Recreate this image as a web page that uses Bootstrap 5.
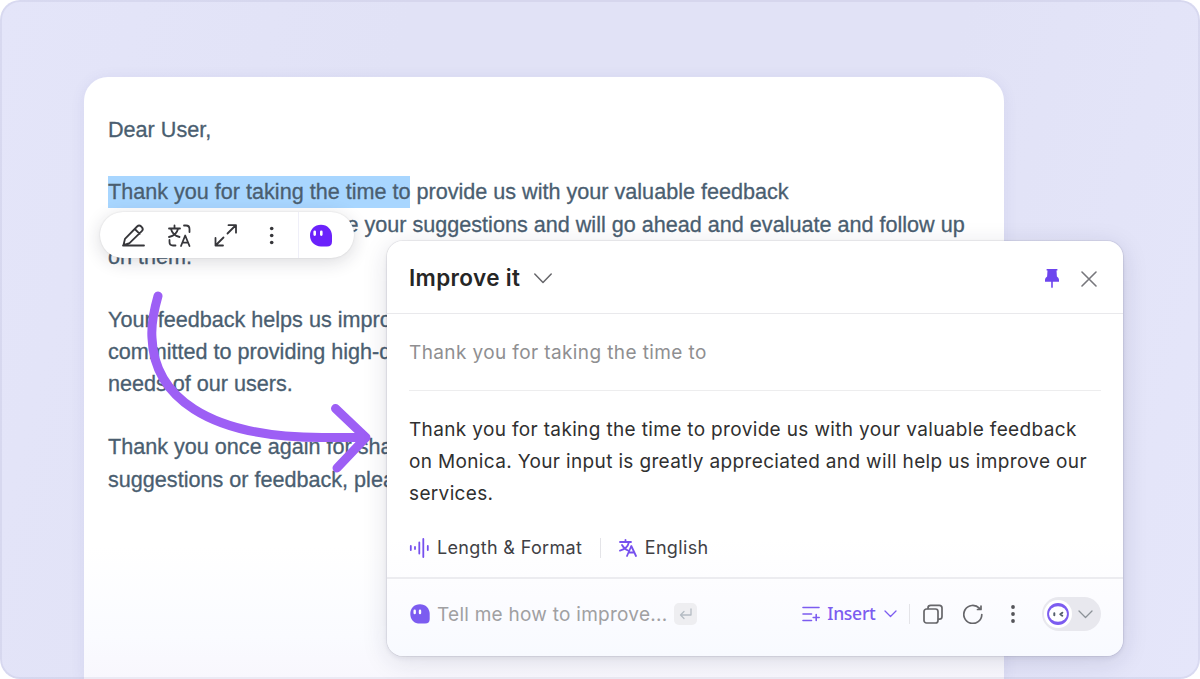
<!DOCTYPE html>
<html lang="en">
<head>
<meta charset="utf-8">
<meta name="viewport" content="width=device-width, initial-scale=1">
<title>Improve it</title>
<link href="https://cdn.jsdelivr.net/npm/bootstrap@5.3.0/dist/css/bootstrap.min.css" rel="stylesheet">
<style>
  body { background: #fff; height: 679px; }
  .stage {
    height: 678.5px; border-radius: 20px;
    padding: 77px 0 0 84px;
    background: linear-gradient(105deg, #e4e5f9 0%, #e1e2f6 30%, #e1e2f6 70%, #e5e6fa 100%);
  }
  .stage::after { content: ""; position: absolute; inset: 0; border: 2px solid rgba(60, 60, 120, .065); border-radius: 20px; pointer-events: none; }
  .letter {
    width: 920px; height: 602px; border-radius: 24px 24px 0 0; padding: 36.7px 24px 0;
    background: linear-gradient(#fff 0%, #fff 78%, #fafbff 93%, #f8f7fd 100%);
    box-shadow: 0 2px 14px rgba(90, 90, 170, .10);
    font: 21.6px/32.3px "Liberation Sans", Arial, sans-serif; color: #4a5e70; -webkit-text-stroke: .3px #4a5e70;
  }
  .letter p { margin: 0 0 30.5px; white-space: nowrap; }
  .picked { background: #a8d6ff; padding: 3px 0 4px; }
  .tools { left: 100px; top: 212px; width: 254px; height: 46px; background: #fff; box-shadow: 0 4px 18px rgba(30, 30, 50, .16), 0 0 2px rgba(0, 0, 0, .12); color: #333; }
  .tools .rule { left: 198px; top: 0; width: 1px; height: 46px; background: #efeff8; }
  .tools svg { position: absolute; top: 0; left: 0; }
  .swoosh { left: 0; top: 0; }
  .panel {
    left: 387px; top: 241px; width: 735.5px; height: 415px; border-radius: 16px;
    font-family: Inter, "Liberation Sans", sans-serif; color: #262626;
    background: linear-gradient(#fff 0%, #fff 72%, #fcfcff 86%, #f8faff 100%);
    box-shadow: 0 0 0 1px rgba(60, 60, 90, .08), 0 5px 26px rgba(30, 30, 70, .13), 0 2px 5px rgba(30, 30, 50, .07);
  }
  .head { height: 73px; padding: 3px 25.5px 0 22px; border-bottom: 1.5px solid #e9e9ec; }
  .head h1 { font-size: 22.5px; font-weight: 600; letter-spacing: .35px; line-height: 1; }
  .quote { height: 77px; padding-top: 1.5px; margin: 0 22px; border-bottom: 1px solid #ededee; font-size: 19px; letter-spacing: .39px; color: #8f8f91; }
  .answer { margin: 0; padding: 22.5px 0 0 22px; height: 126px; font-size: 19px; letter-spacing: .35px; line-height: 32px; white-space: nowrap; color: #303030; }
  .opts { height: 62px; padding: 3px 22px 1px; border-bottom: 2px solid #ececf0; font-size: 18px; color: #404044; letter-spacing: .34px; line-height: 1; }
  .foot { height: 73px; padding: 0 22px 3px; line-height: 1; }
  .foot .ask { margin-left: 6px; font-size: 19px; letter-spacing: .26px; color: #a0a0a2; }
  .vr1 { width: 1px; height: 20px; background: #e4e4e8; }
  .enter { width: 23px; height: 22px; border-radius: 5px; background: #eeeef1; }
  .insert { font: 500 17.6px/1 "Noto Sans", sans-serif; letter-spacing: -.3px; color: #7c5cf0; }
  .who { width: 59px; height: 34px; background: #e8e8ee; }
  svg { flex: none; display: block; fill: none; stroke-linecap: round; stroke-linejoin: round; }
</style>
</head>
<body class="m-0 overflow-hidden">
<main class="stage position-relative overflow-hidden">
  <article class="letter">
    <p>Dear User,</p>
    <p><span class="picked">Thank you for taking the time to</span> provide us with your valuable feedback<br>on Monica. We appreciate your suggestions and will go ahead and evaluate and follow up<br>on them.</p>
    <p>Your feedback helps us impro<br>committed to providing high-q<br>needs of our users.</p>
    <p>Thank you once again for sha<br>suggestions or feedback, plea</p>
  </article>

  <div class="tools position-absolute rounded-pill">
    <div class="rule position-absolute"></div>
    <svg width="254" height="46" stroke="#36363a" stroke-width="1.8">
      <path d="M23 33.500h21M23.500 33l1.500-6.200 12.100-12.300q2-2 4.100 0l.6.6q2 2 0 4.100L29.500 31.200zM34.800 17l4.900 4.900"/>
      <path d="M69 16.500h11M74.500 13.500v3M71 17c1 4 4 7 8.500 8M78 17c-1 4-4 7-9 8M84 13.500h2q3.500 0 3.500 3.500v3M69.500 28v2q0 3.500 3.500 3.500h2.500M81 34l4.200-10.500L89.500 34M82.500 30.700h5.500"/>
      <path d="M127.500 21.500l8-8M128.500 13.200h7.500v7.500M123.500 25.500l-8 8M115.500 26v7.500h7.500"/>
      <g fill="#36363a" stroke="none"><circle cx="171.700" cy="16.500" r="1.800"/><circle cx="171.700" cy="23.500" r="1.800"/><circle cx="171.700" cy="30.500" r="1.800"/></g>
      <path d="M221 12.700c6.300 0 11 4.800 11 11v5.700q0 5-5 5h-6c-6.300 0-11-4.800-11-10.900s4.700-10.800 11-10.800z" fill="#6b22fb" stroke="none"/>
      <path d="M214.700 19.800v2.800M221.300 19.800v2.800" stroke="#fff" stroke-width="2.600"/>
    </svg>
  </div>

  <svg class="swoosh position-absolute" width="400" height="500" stroke="#9d5ff5" stroke-width="9">
    <path d="M158 296C154 310 151 325 152 338C154 395 205 437.500 322 437.500H366M335.500 408.500L366 437.500L337 468"/>
  </svg>

  <section class="panel position-absolute">
    <header class="head d-flex align-items-center">
      <h1 class="m-0">Improve it</h1>
      <svg width="18" height="11" style="margin-left:14px" stroke="#66666a" stroke-width="1.500"><path d="M.8 1l8.200 8.500L17.200 1"/></svg>
      <svg class="ms-auto" width="14" height="20"><path fill="#6d45ee" d="M1.600 0h10.800v1.600h-.9l.4 6q2.100 1.400 2.100 3.200v2H7.800v5.500l-.8 1-.8-1v-5.500H0v-2q0-1.800 2.100-3.200l.4-6h-.9z"/></svg>
      <svg width="16" height="16" style="margin-left:22px" stroke="#77777c" stroke-width="1.600"><path d="M1 1l14 14M15 1L1 15"/></svg>
    </header>
    <div class="quote d-flex align-items-center">Thank you for taking the time to</div>
    <p class="answer">Thank you for taking the time to provide us with your valuable feedback<br>on Monica. Your input is greatly appreciated and will help us improve our<br>services.</p>
    <div class="opts d-flex align-items-center">
      <svg width="22" height="20" stroke="#7650ee" stroke-width="1.800"><path d="M1.800 8v4M6 9v2M10.300 4.500v11M14.300 1v18M18.800 8v4"/></svg>
      <span style="margin-left:6px">Length &amp; Format</span>
      <i class="vr1" style="margin:0 18px 0 17.500px"></i>
      <svg width="18" height="20" stroke="#7650ee" stroke-width="1.800"><path d="M1 4h11M6.500 1.800V4M3 7c2 3.500 4.500 5 6 5.500M10 4c-1 4.500-4.500 7.500-9 8.700M8 18l4.300-10L17 18M9.500 14.500h6"/></svg>
      <span class="ms-2">English</span>
    </div>
    <footer class="foot d-flex align-items-center">
      <svg width="22" height="20"><path d="M11 .2c5.600 0 9.700 4.200 9.700 9.800v5q0 4.600-4.600 4.600H11c-5.800 0-9.700-4-9.700-9.700S5 .2 11 .2z" fill="#7c5cf0"/><path d="M5.700 6.800v2.200M11 6.800v2.200" stroke="#fff" stroke-width="2.400"/></svg>
      <span class="ask">Tell me how to improve...</span>
      <span class="enter d-flex align-items-center justify-content-center" style="margin-left:7px"><svg width="13" height="12" stroke="#b5bcc4" stroke-width="1.300"><path d="M12 1v6H1.500M5 3.500L1.500 7 5 10.500"/></svg></span>
      <div class="ms-auto d-flex align-items-center">
        <svg width="18" height="16" stroke="#7c5cf0" stroke-width="1.600"><path d="M1 1.500h16M1 8h8.500M1 14.500h8.500M14.200 8.500v6M11.200 11.500h6"/></svg>
        <span class="insert" style="margin-left:7px">Insert</span>
        <svg class="ms-2" width="13" height="8" stroke="#7c5cf0" stroke-width="1.300"><path d="M1 1l5.500 5.500L12 1"/></svg>
        <i class="vr1" style="margin:0 13px 0 12px"></i>
        <svg width="20" height="20" stroke="#66666a" stroke-width="1.700"><rect x="1" y="5" width="14" height="14" rx="2.500"/><path d="M5 4.500V4q0-2.700 2.700-2.700h8.600Q19 1.300 19 4v8.500q0 2.700-2.700 2.700H15.500"/></svg>
        <svg width="20" height="20" style="margin-left:20px" stroke="#66666a" stroke-width="1.700"><path d="M18.800 10.500A9 9 0 1 1 16.300 4.200M14.500 5.500h3.500V2"/></svg>
        <svg width="4" height="18" style="margin:0 27px 0 28px"><g fill="#55555a"><circle cx="2" cy="2" r="1.900"/><circle cx="2" cy="9" r="1.900"/><circle cx="2" cy="16" r="1.900"/></g></svg>
        <div class="who rounded-pill d-flex align-items-center">
          <svg width="28" height="28" style="margin-left:2.500px"><circle cx="14" cy="14" r="14" fill="#fff"/><circle cx="14" cy="14" r="10.900" fill="#7c5cf0"/><ellipse cx="14" cy="14" rx="9" ry="7.800" fill="#fff"/><path d="M10.300 13.200v2M18.300 12.700l-2 1.500 2 1.500" stroke="#55606c" stroke-width="2"/></svg>
          <svg width="15" height="9" style="margin-left:6px" stroke="#8c9298" stroke-width="1.300"><path d="M1 1l6.500 6.500L14 1"/></svg>
        </div>
      </div>
    </footer>
  </section>
</main>
<script src="https://cdn.jsdelivr.net/npm/bootstrap@5.3.0/dist/js/bootstrap.bundle.min.js"></script>
</body>
</html>
